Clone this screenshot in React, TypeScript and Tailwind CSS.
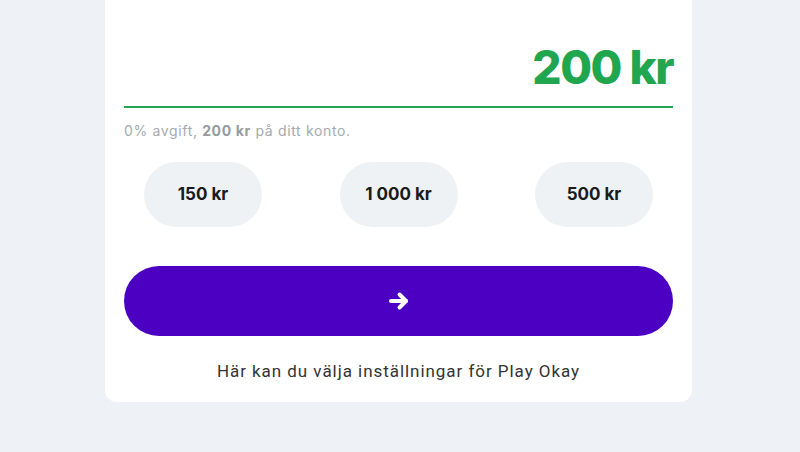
import React from "react";

export default function App() {
  const chips = ["150 kr", "1 000 kr", "500 kr"];
  return (
    <div className="w-[800px] h-[452px] bg-[#eef2f6] overflow-hidden" style={{ fontFamily: "Inter, 'Noto Sans', sans-serif" }}>
      <div className="ml-[105px] w-[587px] bg-white rounded-b-xl px-[19px] pt-[44px] pb-[19px]">
        <div className="border-b-2 border-[#1fa64f] pb-[16px] text-right">
          <span className="text-[46px] leading-[46px] font-extrabold text-[#1fa64f] tracking-[-1.5px]">200 kr</span>
        </div>
        <p className="mt-[13px] text-[14px] leading-[19px] tracking-[0.65px] text-[#a3abb0]">
          0% avgift, <span className="font-bold text-[#949ca1]">200 kr</span> på ditt konto.
        </p>
        <div className="mt-[22px] flex justify-between px-[20px]">
          {chips.map((c) => (
            <div key={c} className="h-[65px] w-[118px] rounded-full bg-[#eef2f5] flex items-center justify-center text-[17px] font-bold text-[#1a1a1a]">
              {c}
            </div>
          ))}
        </div>
        <button className="mt-[39px] w-full h-[70px] rounded-full bg-[#4c00c2] flex items-center justify-center text-white">
          <svg width="22" height="20" viewBox="0 0 22 20" fill="none" stroke="white" strokeWidth="4" strokeLinecap="round" strokeLinejoin="round">
            <path d="M3 10 H18" />
            <path d="M11.5 3.5 L18 10 L11.5 16.5" />
          </svg>
        </button>
        <p className="mt-[23px] text-center text-[17px] leading-[24px] tracking-[0.95px] text-[#333333]" style={{ fontFamily: "Roboto, 'Noto Sans', sans-serif" }}>
          Här kan du välja inställningar för Play Okay
        </p>
      </div>
    </div>
  );
}
